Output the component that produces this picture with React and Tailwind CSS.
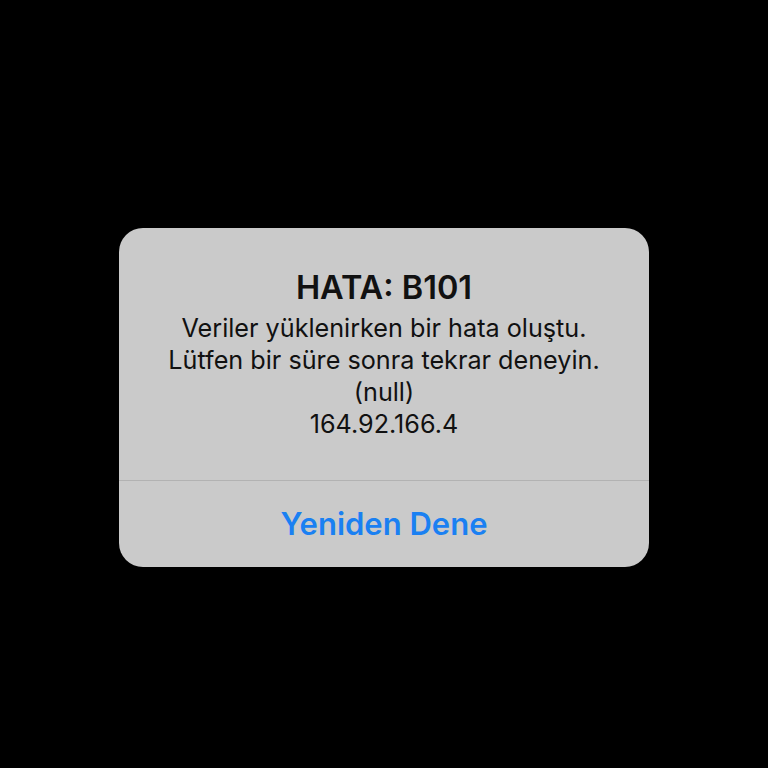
import React from "react";

export default function App() {
  return (
    <div
      className="w-[768px] h-[768px] bg-black flex items-center justify-center"
      style={{ fontFamily: "Inter, 'Liberation Sans', sans-serif" }}
    >
      <div className="w-[530px] h-[339px] mt-[27px] rounded-[24px] bg-[#cacaca] flex flex-col overflow-hidden">
        <div className="flex-1 flex flex-col items-center pt-[41px] px-4 text-center text-[#111]">
          <div className="text-[32.5px] leading-[38px] font-semibold">HATA: B101</div>
          <div className="mt-[5px] text-[25.2px] leading-[32px]">
            <div>Veriler yüklenirken bir hata oluştu.</div>
            <div>Lütfen bir süre sonra tekrar deneyin.</div>
            <div>(null)</div>
            <div>164.92.166.4</div>
          </div>
        </div>
        <div className="h-px bg-[#b2b2b2]" />
        <button className="h-[86px] flex items-center justify-center text-[31px] font-semibold text-[#1a80f2]">
          Yeniden Dene
        </button>
      </div>
    </div>
  );
}
